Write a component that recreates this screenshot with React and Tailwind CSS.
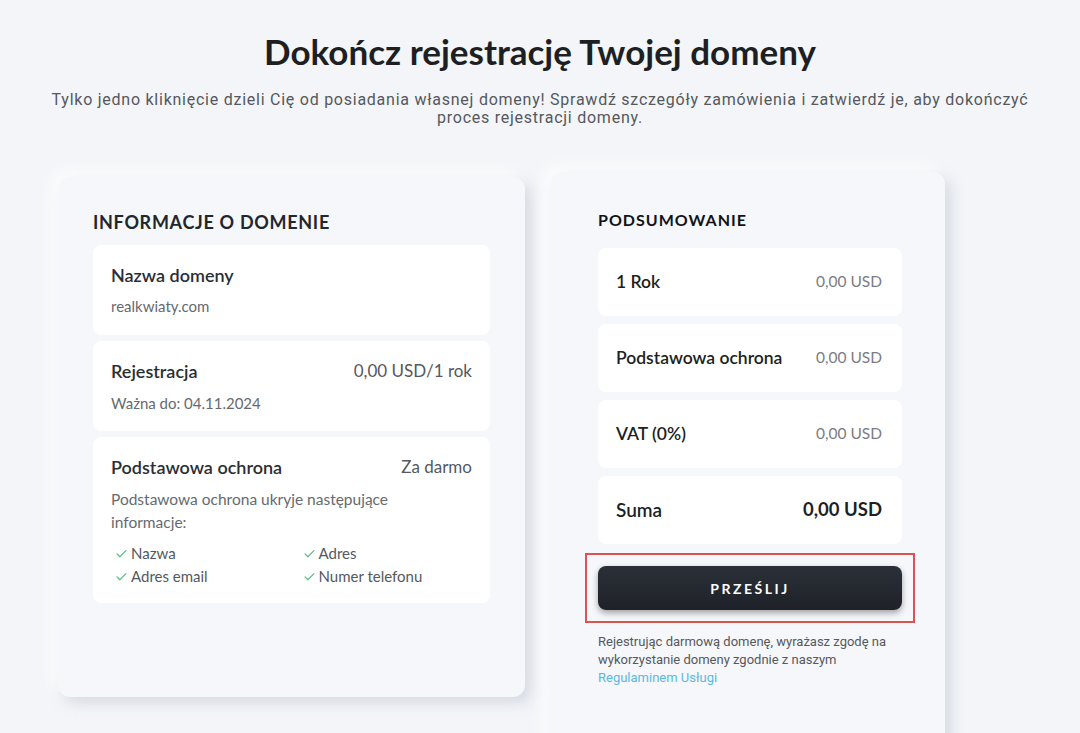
import React from 'react';

const Check = () => (
  <svg width="13" height="13" viewBox="0 0 16 16" fill="none" className="shrink-0">
    <path d="M2.5 8.5l3.5 3.5 7.5-7.5" stroke="#5fbf8a" strokeWidth="1.6" strokeLinecap="round" strokeLinejoin="round" />
  </svg>
);

const cardShadow = 'shadow-[6px_6px_14px_rgba(160,170,185,0.35),-6px_-6px_14px_rgba(255,255,255,0.9)]';

const DomainInfo = () => (
  <div className={`w-[467px] h-[520px] bg-[#f5f7fa] rounded-xl px-[35px] pt-[36px] ${cardShadow}`}>
    <h2 className="text-[18px] font-bold tracking-[0.7px] text-[#23262b] leading-none mb-[14px]">INFORMACJE O DOMENIE</h2>
    <div className="flex flex-col gap-[6px]">
      <div className="bg-white rounded-lg px-[18px] pt-[18px] h-[90px]">
        <div className="text-[18px] font-semibold text-[#2b2e33] leading-[24px]">Nazwa domeny</div>
        <div className="text-[15px] text-[#666a70] mt-[9px] leading-[20px]">realkwiaty.com</div>
      </div>
      <div className="bg-white rounded-lg px-[18px] pt-[18px] h-[90px]">
        <div className="flex justify-between items-center">
          <span className="text-[18px] font-semibold text-[#2b2e33] leading-[24px]">Rejestracja</span>
          <span className="text-[17px] text-[#55585e] leading-[24px]">0,00 USD/1 rok</span>
        </div>
        <div className="text-[15px] text-[#666a70] mt-[10px] leading-[20px]">Ważna do: 04.11.2024</div>
      </div>
      <div className="bg-white rounded-lg px-[18px] pt-[18px] h-[166px]">
        <div className="flex justify-between items-center">
          <span className="text-[18px] font-semibold text-[#2b2e33] leading-[24px]">Podstawowa ochrona</span>
          <span className="text-[17px] text-[#55585e] leading-[24px]">Za darmo</span>
        </div>
        <p className="text-[15.5px] text-[#666a70] mt-[9px] leading-[23px] w-[300px]">Podstawowa ochrona ukryje następujące informacje:</p>
        <div className="grid grid-cols-2 mt-[8px] pl-[4px] text-[15px] text-[#55585e] leading-[23px]">
          <div className="flex items-center gap-[3px]"><Check />Nazwa</div>
          <div className="flex items-center gap-[3px] pl-[9px]"><Check />Adres</div>
          <div className="flex items-center gap-[3px]"><Check />Adres email</div>
          <div className="flex items-center gap-[3px] pl-[9px]"><Check />Numer telefonu</div>
        </div>
      </div>
    </div>
  </div>
);

const SummaryRow = ({ label, value, total }) => (
  <div className="bg-white rounded-lg h-[68px] pl-[18px] pr-[20px] flex items-center justify-between">
    <span className={total ? 'text-[19px] font-semibold text-[#1d1f23]' : 'text-[17.5px] font-semibold text-[#1d1f23]'}>{label}</span>
    <span className={total ? 'text-[18.5px] font-bold text-[#1d1f23]' : 'text-[15.5px] text-[#7a7d82]'}>{value}</span>
  </div>
);

const Summary = () => (
  <div className={`w-[395px] h-[600px] bg-[#f5f7fa] rounded-xl pl-[48px] pr-[43px] pt-[40px] -mt-[5px] ${cardShadow}`}>
    <h2 className="text-[16px] font-bold tracking-[1px] text-[#111317] leading-none mb-[20px]">PODSUMOWANIE</h2>
    <div className="flex flex-col gap-[8px]">
      <SummaryRow label="1 Rok" value="0,00 USD" />
      <SummaryRow label="Podstawowa ochrona" value="0,00 USD" />
      <SummaryRow label="VAT (0%)" value="0,00 USD" />
      <SummaryRow label="Suma" value="0,00 USD" total />
    </div>
    <div className="-mx-[13px] mt-[9px] border-2 border-[#d9534f] px-[11px] py-[11px]">
      <button className="w-full h-[44px] rounded-lg bg-gradient-to-b from-[#2b3038] to-[#1e2128] text-white text-[14px] font-bold tracking-[2.5px] shadow-[0_3px_6px_rgba(0,0,0,0.35)]">PRZEŚLIJ</button>
    </div>
    <p className="mt-[10px] text-[13px] leading-[18px] text-[#55585e] font-['Roboto',sans-serif]">
      Rejestrując darmową domenę, wyrażasz zgodę na wykorzystanie domeny zgodnie z naszym <a className="text-[#5bb8e3]">Regulaminem Usługi</a>
    </p>
  </div>
);

export default function App() {
  return (
    <div className="min-h-[733px] bg-[#f3f5f8] font-['Lato',sans-serif] overflow-hidden">
      <div className="pt-[28px] text-center">
        <h1 className="text-[35px] font-bold text-[#1d1f23] leading-[46px]">Dokończ rejestrację Twojej domeny</h1>
        <p className="mt-[17px] mx-auto w-[1000px] text-[16px] tracking-[0.75px] leading-[18px] text-[#55585e] font-['Roboto',sans-serif]">
          Tylko jedno kliknięcie dzieli Cię od posiadania własnej domeny! Sprawdź szczegóły zamówienia i zatwierdź je, aby dokończyć proces rejestracji domeny.
        </p>
      </div>
      <div className="flex items-start gap-[25px] pl-[58px] mt-[50px]">
        <DomainInfo />
        <Summary />
      </div>
    </div>
  );
}
